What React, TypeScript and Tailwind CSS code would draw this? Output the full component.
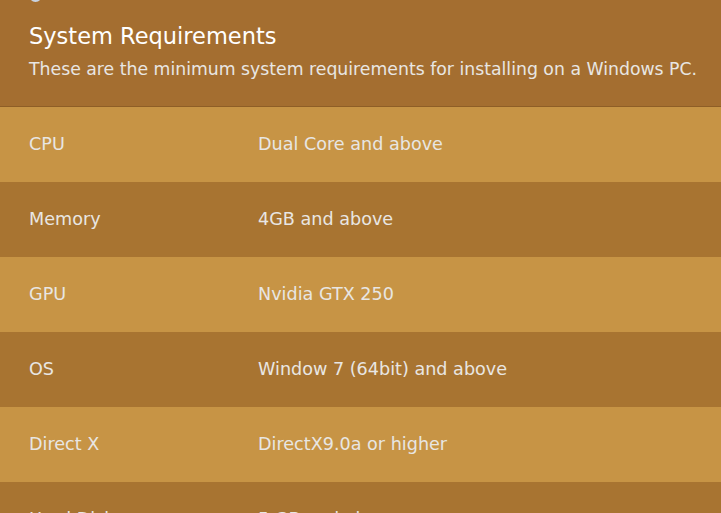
const specs = [
  { label: "CPU", value: "Dual Core and above" },
  { label: "Memory", value: "4GB and above" },
  { label: "GPU", value: "Nvidia GTX 250" },
  { label: "OS", value: "Window 7 (64bit) and above" },
  { label: "Direct X", value: "DirectX9.0a or higher" },
  { label: "Hard Disk", value: "5 GB and above" },
];

export default function App() {
  return (
    <div
      className="w-[721px] h-[513px] overflow-hidden bg-[#a46e30] text-[#e8e6e3]"
      style={{ fontFamily: "'DejaVu Sans', sans-serif" }}
    >
      <div className="flex flex-col h-[107px] px-[29px] border-b border-[#8e5e26]">
        <div className="flex items-center gap-[36px] -mt-[12px] h-[14px]">
          <span className="w-[13px] h-[13px] rounded-full bg-[#c9d3e0]" />
          <span className="text-[12px] font-bold text-[#2a2016]">SIZE</span>
        </div>
        <h2 className="mt-[19px] text-[22.5px] leading-[30px] text-white">
          System Requirements
        </h2>
        <p className="mt-[6px] text-[17.3px] leading-[24px] whitespace-nowrap">
          These are the minimum system requirements for installing on a Windows PC.
        </p>
      </div>
      {specs.map((s, i) => (
        <div
          key={s.label}
          className={`flex items-center h-[75px] px-[29px] text-[17.6px] ${
            i % 2 === 0 ? "bg-[#c79445]" : "bg-[#a87431]"
          }`}
        >
          <span className="w-[229px]">{s.label}</span>
          <span>{s.value}</span>
        </div>
      ))}
    </div>
  );
}
